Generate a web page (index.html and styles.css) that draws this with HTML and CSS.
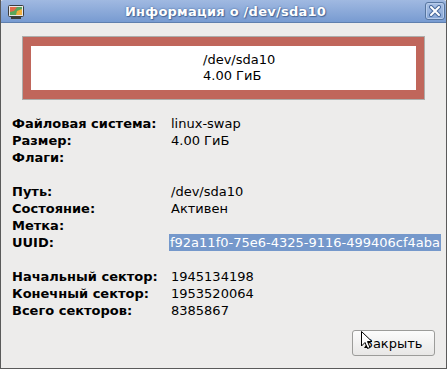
FILE: index.html
```html
<!DOCTYPE html>
<html lang="ru">
<head>
<meta charset="utf-8">
<title>Информация о /dev/sda10</title>
<link rel="stylesheet" href="styles.css">
</head>
<body>
<div class="window">
  <div class="titlebar">
    <svg class="app-icon" width="16" height="14" viewBox="0 0 16 14">
      <rect x="0.5" y="0.5" width="15" height="11" rx="1" fill="#e8e8e8" stroke="#3c3c3c"/>
      <rect x="2" y="2" width="12" height="8" fill="#5aa65a"/>
      <path d="M2 2h7l-3 4-4 1z" fill="#e06a4a"/>
      <path d="M9 6l5-2v6h-6z" fill="#f0b040"/>
      <rect x="3" y="12" width="10" height="2" fill="#3c3c3c"/>
    </svg>
    <div class="title">Информация о /dev/sda10</div>
    <div class="close-btn">
      <svg width="12" height="12" viewBox="0 0 12 12">
        <path d="M2 2L10 10M10 2L2 10" stroke="#4a6a9c" stroke-width="4" stroke-linecap="round"/>
        <path d="M2 2L10 10M10 2L2 10" stroke="#ffffff" stroke-width="2" stroke-linecap="round"/>
      </svg>
    </div>
  </div>
  <div class="content">
    <div class="partition-frame">
      <div class="partition-inner">
        <div>/dev/sda10</div>
        <div>4.00 ГиБ</div>
      </div>
    </div>
    <div class="info">
      <div class="label">Файловая система:</div><div class="value">linux-swap</div>
      <div class="label">Размер:</div><div class="value">4.00 ГиБ</div>
      <div class="label">Флаги:</div><div class="value"></div>
      <div class="blank"></div><div class="blank"></div>
      <div class="label">Путь:</div><div class="value">/dev/sda10</div>
      <div class="label">Состояние:</div><div class="value">Активен</div>
      <div class="label">Метка:</div><div class="value"></div>
      <div class="label">UUID:</div><div class="value"><span class="selected">f92a11f0-75e6-4325-9116-499406cf4aba</span></div>
      <div class="blank"></div><div class="blank"></div>
      <div class="label">Начальный сектор:</div><div class="value">1945134198</div>
      <div class="label">Конечный сектор:</div><div class="value">1953520064</div>
      <div class="label">Всего секторов:</div><div class="value">8385867</div>
    </div>
    <div class="actions">
      <button class="btn">Закрыть</button>
    </div>
  </div>
  <svg class="cursor" width="13" height="20" viewBox="0 0 13 20">
    <path d="M0.5 0.5L0.5 15L4 11.5L6.5 17.5L9 16.5L6.5 10.5L11 10.5Z" fill="#ffffff" stroke="#000000" stroke-width="1" stroke-linejoin="miter"/>
    <path d="M3 17L7 17L5 14Z" fill="#000"/>
  </svg>
</div>
</body>
</html>
```

FILE: styles.css
```css
html, body {
  margin: 0;
  padding: 0;
  background: #edeceb;
}
body {
  font-family: "DejaVu Sans", "Liberation Sans", sans-serif;
  font-size: 13px;
  color: #000;
}
.window {
  position: relative;
  width: 447px;
  height: 369px;
  box-sizing: border-box;
  display: flex;
  flex-direction: column;
  background: #edeceb;
  border-left: 1px solid #5a5a5a;
  border-right: 1px solid #5a5a5a;
  border-bottom: 1px solid #5a5a5a;
  overflow: hidden;
}
.titlebar {
  height: 23px;
  flex: none;
  display: flex;
  align-items: center;
  background: linear-gradient(#a0b9e1, #789bd1);
  border-radius: 4px 4px 0 0;
  border-bottom: 1px solid #5f7fae;
  box-sizing: border-box;
  margin: 0 -1px;
  padding: 0 2px 0 8px;
}
.app-icon {
  flex: none;
  margin-top: 1px;
}
.title {
  flex: 1;
  text-align: center;
  color: #fff;
  font-weight: bold;
  font-size: 13px;
  letter-spacing: 0.25px;
  text-shadow: 0 0 2px #3e5f93, 1px 1px 1px #4a6a9c;
  padding-left: 2px;
}
.close-btn {
  flex: none;
  width: 20px;
  height: 18px;
  box-sizing: border-box;
  border: 1px solid #56759f;
  border-radius: 3px;
  background: linear-gradient(#a9c0e4, #86a6d6);
  box-shadow: inset 0 0 0 1px #b8cceb;
  display: flex;
  align-items: center;
  justify-content: center;
}
.content {
  flex: 1;
  display: flex;
  flex-direction: column;
  padding: 13px 11px 12px 11px;
}
.partition-frame {
  margin: 0 10px;
  border: 1px solid #adadab;
}
.partition-inner {
  border-style: solid;
  border-color: #c0665b;
  border-width: 9px 8px;
  background: #fff;
  padding: 6px 0 6px 172px;
  line-height: 16px;
}
.info {
  margin-top: 15px;
  display: grid;
  grid-template-columns: 159px 1fr;
  line-height: 17px;
}
.label {
  font-weight: bold;
  height: 17px;
  white-space: nowrap;
}
.value {
  height: 17px;
  white-space: nowrap;
}
.blank {
  height: 17px;
}
.selected {
  display: inline-block;
  background: #7598cb;
  color: #fff;
  padding: 0 1px;
  margin-left: -2px;
}
.actions {
  margin-top: auto;
  display: flex;
  justify-content: flex-end;
}
.btn {
  width: 83px;
  height: 26px;
  box-sizing: border-box;
  border: 1px solid #9c9c9a;
  border-radius: 3px;
  background: linear-gradient(#fcfcfc, #e8e7e6);
  font-family: "DejaVu Sans", "Liberation Sans", sans-serif;
  font-size: 13px;
  color: #000;
  padding: 0;
}
.cursor {
  position: absolute;
  left: 360px;
  top: 331px;
}
```
